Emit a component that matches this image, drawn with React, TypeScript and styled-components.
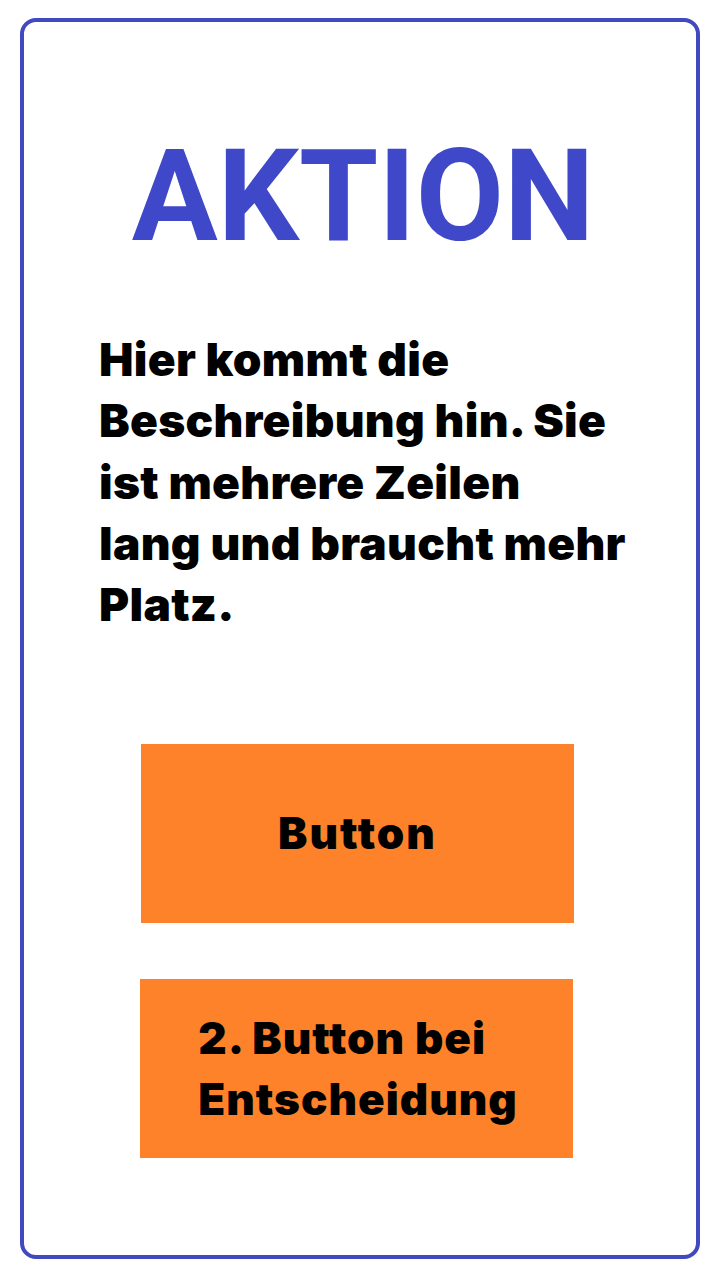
import React from "react";
import styled, { createGlobalStyle } from "styled-components";

const GlobalStyle = createGlobalStyle`
  html, body { margin: 0; padding: 0; background: #ffffff; }
  #root { width: 720px; height: 1280px; }
`;

const Page = styled.div`
  width: 720px;
  height: 1280px;
  box-sizing: border-box;
  padding: 18px 20px 21px 20px;
  background: #ffffff;
`;

const Card = styled.div`
  height: 100%;
  box-sizing: border-box;
  border: 4px solid #4049bf;
  border-radius: 16px;
  display: flex;
  flex-direction: column;
`;

const Title = styled.h1`
  margin: 110px 0 0 0;
  font-family: Roboto, "Liberation Sans", sans-serif;
  font-weight: 700;
  font-size: 128px;
  line-height: 129px;
  color: #3f48c8;
  text-align: center;
  padding-left: 6px;
`;

const Description = styled.p`
  margin: 68px 0 0 75px;
  font-family: Inter, "Noto Sans", sans-serif;
  font-weight: 900;
  font-size: 46px;
  line-height: 61.3px;
  letter-spacing: 0.3px;
  color: #000000;
  white-space: nowrap;
`;

const Buttons = styled.div`
  margin-top: 109px;
  display: flex;
  flex-direction: column;
  align-items: center;
  gap: 56px;
  padding-right: 7px;
`;

const ActionButton = styled.button<{ $shift?: number }>`
  width: 433px;
  height: 179px;
  flex-shrink: 0;
  border: none;
  border-radius: 0;
  background: #fe822a;
  display: flex;
  align-items: center;
  justify-content: center;
  padding: 0;
  margin-left: ${(p) => p.$shift ?? 0}px;
  cursor: pointer;
`;

const ButtonLabel = styled.span<{ $align: "center" | "left"; $spacing: number; $indent?: number }>`
  display: inline-block;
  font-family: Inter, "Noto Sans", sans-serif;
  font-weight: 900;
  font-size: 44px;
  line-height: 61px;
  letter-spacing: ${(p) => p.$spacing}px;
  color: #000000;
  text-align: ${(p) => p.$align};
  margin-left: ${(p) => p.$indent ?? 0}px;
`;

export default function App() {
  return (
    <>
      <GlobalStyle />
      <Page>
        <Card>
          <Title>AKTION</Title>
          <Description>
            Hier kommt die
            <br />
            Beschreibung hin. Sie
            <br />
            ist mehrere Zeilen
            <br />
            lang und braucht mehr
            <br />
            Platz.
          </Description>
          <Buttons>
            <ActionButton $shift={2}>
              <ButtonLabel $align="center" $spacing={2}>
                Button
              </ButtonLabel>
            </ActionButton>
            <ActionButton>
              <ButtonLabel $align="left" $spacing={1} $indent={3}>
                2. Button bei
                <br />
                Entscheidung
              </ButtonLabel>
            </ActionButton>
          </Buttons>
        </Card>
      </Page>
    </>
  );
}
